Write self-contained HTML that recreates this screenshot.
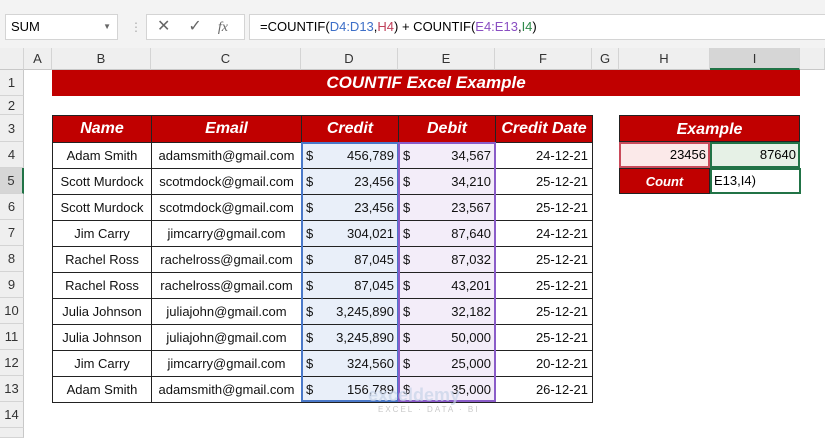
<!DOCTYPE html>
<html><head><meta charset="utf-8"><style>
*{box-sizing:border-box;margin:0;padding:0}
body{width:825px;height:437px;overflow:hidden;background:#fff;font-family:"Liberation Sans",Calibri,sans-serif;position:relative}
.a{position:absolute}
.top{left:0;top:0;width:825px;height:48px;background:#f3f3f3}
.box{background:#fff;border:1px solid #d4d4d4}
.ch{top:48px;height:22px;background:#efefef;border-right:1px solid #d4d4d4;border-bottom:1px solid #c8c8c8;font-size:13px;color:#333;text-align:center;line-height:22px}
.rh{left:0;width:24px;background:#efefef;border-bottom:1px solid #d4d4d4;border-right:1px solid #c8c8c8;font-size:13px;color:#333;text-align:center}
table{border-collapse:collapse;position:absolute;left:52px;top:115px;table-layout:fixed}
td{border:1px solid #222;height:26px;font-size:13px;padding:0 4px;white-space:nowrap;color:#111;overflow:hidden}
th{background:#c00000;color:#fff;font-style:italic;font-weight:bold;font-size:16px;border:1px solid #222;height:27px}
.c{text-align:center}.r{text-align:right}
.d{background:#e9eff9}.e{background:#f3edf9}
.m{display:flex;justify-content:space-between}
</style></head><body>
<div class="a top"></div>
<div class="a box" style="left:5px;top:14px;width:113px;height:26px;font-size:13px;line-height:24px;padding-left:5px">SUM<span style="position:absolute;right:6px;font-size:8px;color:#666">▼</span></div>
<div class="a" style="left:130px;top:20px;color:#aaa;font-size:12px">⋮</div>
<div class="a box" style="left:146px;top:14px;width:99px;height:26px;color:#666;font-size:16px;line-height:24px"><span style="margin-left:10px">✕</span><span style="margin-left:18px">✓</span><span style="margin-left:16px;font-style:italic;font-family:'Liberation Serif';font-size:14px">fx</span></div>
<div class="a box" style="left:249px;top:14px;width:580px;height:26px;font-size:13px;line-height:24px;padding-left:10px">=COUNTIF(<span style="color:#3d6fc8">D4:D13</span>,<span style="color:#c0405a">H4</span>) + COUNTIF(<span style="color:#8a4fc2">E4:E13</span>,<span style="color:#2f8a4a">I4</span>)</div>
<div class="a ch" style="left:0;width:24px"></div>
<div class="a ch" style="left:24px;width:28px">A</div>
<div class="a ch" style="left:52px;width:99px">B</div>
<div class="a ch" style="left:151px;width:150px">C</div>
<div class="a ch" style="left:301px;width:97px">D</div>
<div class="a ch" style="left:398px;width:97px">E</div>
<div class="a ch" style="left:495px;width:97px">F</div>
<div class="a ch" style="left:592px;width:27px">G</div>
<div class="a ch" style="left:619px;width:91px">H</div>
<div class="a ch" style="left:710px;width:90px;background:#d6d6d6;border-bottom:2px solid #217346">I</div>
<div class="a ch" style="left:800px;width:25px"></div>
<div class="a rh" style="top:70px;height:26px;line-height:26px">1</div>
<div class="a rh" style="top:96px;height:19px;line-height:19px">2</div>
<div class="a rh" style="top:115px;height:27px;line-height:27px">3</div>
<div class="a rh" style="top:142px;height:26px;line-height:26px">4</div>
<div class="a rh" style="top:168px;height:26px;line-height:26px;background:#d6d6d6;border-right:2px solid #217346">5</div>
<div class="a rh" style="top:194px;height:26px;line-height:26px">6</div>
<div class="a rh" style="top:220px;height:26px;line-height:26px">7</div>
<div class="a rh" style="top:246px;height:26px;line-height:26px">8</div>
<div class="a rh" style="top:272px;height:26px;line-height:26px">9</div>
<div class="a rh" style="top:298px;height:26px;line-height:26px">10</div>
<div class="a rh" style="top:324px;height:26px;line-height:26px">11</div>
<div class="a rh" style="top:350px;height:26px;line-height:26px">12</div>
<div class="a rh" style="top:376px;height:26px;line-height:26px">13</div>
<div class="a rh" style="top:402px;height:26px;line-height:26px">14</div>
<div class="a rh" style="top:428px;height:10px"></div>
<div class="a" style="left:52px;top:70px;width:748px;height:26px;background:#c00000;color:#fff;font-weight:bold;font-style:italic;font-size:17px;text-align:center;line-height:26px">COUNTIF Excel Example</div>
<table>
<colgroup><col style="width:99px"><col style="width:150px"><col style="width:97px"><col style="width:97px"><col style="width:97px"></colgroup>
<tr><th>Name</th><th>Email</th><th>Credit</th><th>Debit</th><th>Credit Date</th></tr>
<tr><td class="c">Adam Smith</td><td class="c">adamsmith@gmail.com</td><td class="d"><div class="m"><span>$</span><span>456,789</span></div></td><td class="e"><div class="m"><span>$</span><span>34,567</span></div></td><td class="r">24-12-21</td></tr>
<tr><td class="c">Scott Murdock</td><td class="c">scotmdock@gmail.com</td><td class="d"><div class="m"><span>$</span><span>23,456</span></div></td><td class="e"><div class="m"><span>$</span><span>34,210</span></div></td><td class="r">25-12-21</td></tr>
<tr><td class="c">Scott Murdock</td><td class="c">scotmdock@gmail.com</td><td class="d"><div class="m"><span>$</span><span>23,456</span></div></td><td class="e"><div class="m"><span>$</span><span>23,567</span></div></td><td class="r">25-12-21</td></tr>
<tr><td class="c">Jim Carry</td><td class="c">jimcarry@gmail.com</td><td class="d"><div class="m"><span>$</span><span>304,021</span></div></td><td class="e"><div class="m"><span>$</span><span>87,640</span></div></td><td class="r">24-12-21</td></tr>
<tr><td class="c">Rachel Ross</td><td class="c">rachelross@gmail.com</td><td class="d"><div class="m"><span>$</span><span>87,045</span></div></td><td class="e"><div class="m"><span>$</span><span>87,032</span></div></td><td class="r">25-12-21</td></tr>
<tr><td class="c">Rachel Ross</td><td class="c">rachelross@gmail.com</td><td class="d"><div class="m"><span>$</span><span>87,045</span></div></td><td class="e"><div class="m"><span>$</span><span>43,201</span></div></td><td class="r">25-12-21</td></tr>
<tr><td class="c">Julia Johnson</td><td class="c">juliajohn@gmail.com</td><td class="d"><div class="m"><span>$</span><span>3,245,890</span></div></td><td class="e"><div class="m"><span>$</span><span>32,182</span></div></td><td class="r">25-12-21</td></tr>
<tr><td class="c">Julia Johnson</td><td class="c">juliajohn@gmail.com</td><td class="d"><div class="m"><span>$</span><span>3,245,890</span></div></td><td class="e"><div class="m"><span>$</span><span>50,000</span></div></td><td class="r">25-12-21</td></tr>
<tr><td class="c">Jim Carry</td><td class="c">jimcarry@gmail.com</td><td class="d"><div class="m"><span>$</span><span>324,560</span></div></td><td class="e"><div class="m"><span>$</span><span>25,000</span></div></td><td class="r">20-12-21</td></tr>
<tr><td class="c">Adam Smith</td><td class="c">adamsmith@gmail.com</td><td class="d"><div class="m"><span>$</span><span>156,789</span></div></td><td class="e"><div class="m"><span>$</span><span>35,000</span></div></td><td class="r">26-12-21</td></tr>
</table>
<div class="a" style="left:301px;top:142px;width:98px;height:260px;border:2px solid #4a78c8"></div>
<div class="a" style="left:398px;top:142px;width:98px;height:260px;border:2px solid #8a5cc8"></div>
<div class="a" style="left:619px;top:115px;width:181px;height:27px;background:#c00000;color:#fff;font-weight:bold;font-style:italic;font-size:16px;text-align:center;line-height:27px;border:1px solid #222">Example</div>
<div class="a" style="left:619px;top:142px;width:91px;height:26px;background:#fbe9e9;border:2px solid #c94a5a;text-align:right;font-size:13px;line-height:22px;padding-right:2px">23456</div>
<div class="a" style="left:710px;top:142px;width:90px;height:26px;background:#e6f1e6;border:2px solid #217346;text-align:right;font-size:13px;line-height:22px;padding-right:2px">87640</div>
<div class="a" style="left:619px;top:168px;width:91px;height:26px;background:#c00000;color:#fff;font-weight:bold;font-style:italic;font-size:13px;text-align:center;line-height:26px;border:1px solid #222">Count</div>
<div class="a" style="left:710px;top:168px;width:91px;height:26px;background:#fff;border:2px solid #217346;font-size:13px;line-height:22px;padding-left:2px">E13,I4)</div>
<div class="a" style="left:368px;top:385px;color:#c8d4e8;font-weight:bold;font-size:18px;opacity:.7">exceldemy</div>
<div class="a" style="left:378px;top:405px;color:#c8c8c8;font-size:8px;letter-spacing:2px">EXCEL · DATA · BI</div>
</body></html>
